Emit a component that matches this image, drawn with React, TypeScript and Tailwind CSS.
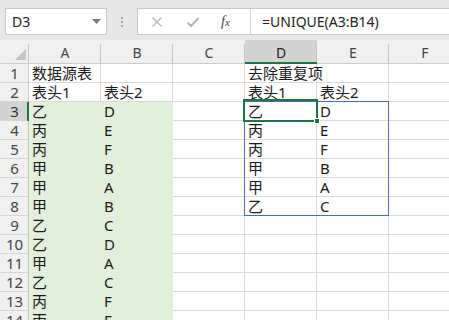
import React from "react";

const COLS = ["A", "B", "C", "D", "E", "F"];
const DATA: string[][] = [
  ["数据源表", "", "", "去除重复项", "", ""],
  ["表头1", "表头2", "", "表头1", "表头2", ""],
  ["乙", "D", "", "乙", "D", ""],
  ["丙", "E", "", "丙", "E", ""],
  ["丙", "F", "", "丙", "F", ""],
  ["甲", "B", "", "甲", "B", ""],
  ["甲", "A", "", "甲", "A", ""],
  ["甲", "B", "", "乙", "C", ""],
  ["乙", "C", "", "", "", ""],
  ["乙", "D", "", "", "", ""],
  ["甲", "A", "", "", "", ""],
  ["乙", "C", "", "", "", ""],
  ["丙", "F", "", "", "", ""],
  ["丙", "F", "", "", "", ""],
];

const font = { fontFamily: '"Noto Sans", "Noto Sans CJK SC", sans-serif' };

export default function App() {
  return (
    <div className="w-[449px] h-[320px] overflow-hidden bg-white" style={font}>
      {/* formula bar */}
      <div className="h-[40px] bg-[#e8e8e8] flex items-start pt-[8px]">
        <div className="ml-[5px] w-[102px] h-[27px] bg-white border border-[#c8c8c8] flex items-center pl-[6px] pr-[5px]">
          <span className="text-[14px] text-[#222] flex-1 leading-none">D3</span>
          <svg width="9" height="6" viewBox="0 0 9 6">
            <path d="M0 0 L9 0 L4.5 5 Z" fill="#7a7a7a" />
          </svg>
        </div>
        <div className="w-[30px] h-[27px] flex flex-col items-center justify-center gap-[2px]">
          <div className="w-[2px] h-[2px] bg-[#a8a8a8]" />
          <div className="w-[2px] h-[2px] bg-[#a8a8a8]" />
          <div className="w-[2px] h-[2px] bg-[#a8a8a8]" />
        </div>
        <div className="flex-1 h-[27px] bg-white border border-[#c8c8c8] border-r-0 flex items-center">
          <div className="w-[112px] flex items-center h-full">
            <svg className="ml-[13px]" width="12" height="12" viewBox="0 0 12 12">
              <path d="M1.5 1.5 L10.5 10.5 M10.5 1.5 L1.5 10.5" stroke="#b4b4b4" strokeWidth="1.3" fill="none" />
            </svg>
            <svg className="ml-[23px]" width="14" height="12" viewBox="0 0 14 12">
              <path d="M1.5 6.5 L5 10 L12.5 2" stroke="#b4b4b4" strokeWidth="2" fill="none" />
            </svg>
            <span
              className="ml-[21px] text-[14px] italic text-[#444] leading-none"
              style={{ fontFamily: '"Liberation Serif", "DejaVu Serif", serif' }}
            >
              f<span className="text-[11px]">x</span>
            </span>
          </div>
          <div className="w-px h-full bg-[#d6d6d6]" />
          <span className="ml-[11px] text-[14px] text-[#222] leading-none">=UNIQUE(A3:B14)</span>
        </div>
      </div>

      {/* grid */}
      <div className="relative">
        {/* column header */}
        <div className="flex h-[24px] bg-[#f0f0f0] border-b border-[#cbcbcb]">
          <div className="w-[29px] shrink-0 flex items-end justify-end relative">
            <svg className="mb-[3px] mr-[3px]" width="11" height="11" viewBox="0 0 11 11">
              <path d="M11 0 L11 11 L0 11 Z" fill="#c4c4c4" />
            </svg>
            <div className="absolute right-0 bottom-0 w-px h-[19px] bg-[#c6c6c6]" />
          </div>
          {COLS.map((c) => {
            const sel = c === "D";
            return (
              <div
                key={c}
                className={
                  "w-[72px] shrink-0 relative flex items-center justify-center text-[14px] " +
                  (sel ? "bg-[#d3d3d3] text-[#1e1e1e]" : "text-[#444]")
                }
              >
                <span className="pt-[2px]">{c}</span>
                <div className="absolute right-0 bottom-0 w-px h-[19px] bg-[#c6c6c6]" />
                {sel && <div className="absolute left-0 right-0 bottom-[-1px] h-[2px] bg-[#217346]" />}
              </div>
            );
          })}
        </div>

        {/* rows */}
        {DATA.map((row, ri) => {
          const rn = ri + 1;
          const rsel = rn === 3;
          return (
            <div key={rn} className="flex h-[19px]">
              <div
                className={
                  "w-[29px] shrink-0 border-b border-[#d6d6d6] flex items-center justify-center text-[15px] leading-none relative " +
                  (rsel ? "bg-[#d3d3d3] text-[#333]" : "bg-[#f0f0f0] text-[#444]")
                }
              >
                {rn}
                <div
                  className={
                    "absolute right-0 top-0 bottom-[-1px] " +
                    (rsel ? "w-[2px] bg-[#217346]" : "w-px bg-[#c6c6c6]")
                  }
                />
              </div>
              {row.map((v, ci) => {
                const green = rn >= 3 && ci <= 1;
                return (
                  <div
                    key={ci}
                    className={
                      "w-[72px] shrink-0 border-r border-b pl-[3px] flex items-center text-[15px] text-[#1a1a1a] leading-none whitespace-nowrap overflow-visible " +
                      (green ? "bg-[#e2efda] border-[#e2efda]" : "border-[#d9d9d9]")
                    }
                  >
                    {v}
                  </div>
                );
              })}
            </div>
          );
        })}

        {/* spill range outline */}
        <div className="absolute left-[244px] top-[61px] w-[145px] h-[115px] border border-[#4a6ea9] pointer-events-none" />
        {/* active cell */}
        <div className="absolute left-[243px] top-[59px] w-[75px] h-[23px] border-2 border-[#217346] pointer-events-none" />
        <div className="absolute left-[314px] top-[78px] w-[6px] h-[6px] bg-[#217346] border border-white" />
      </div>
    </div>
  );
}
